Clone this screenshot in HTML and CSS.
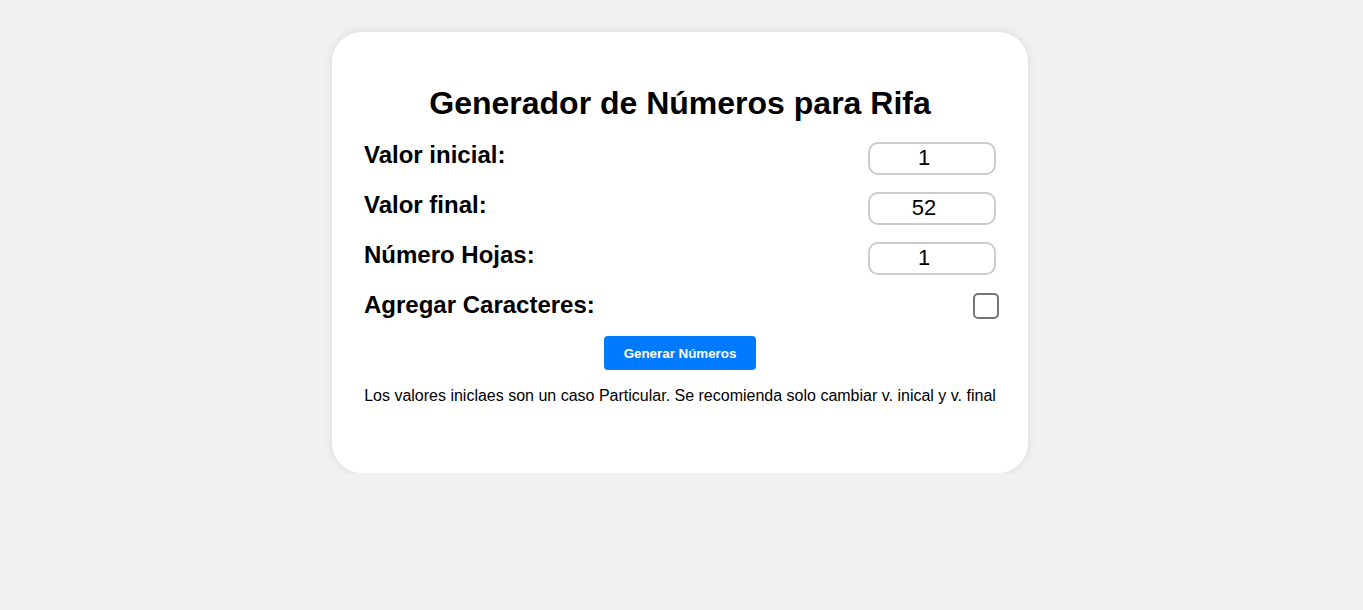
FILE: index.html
```html
<!DOCTYPE html>
<html lang="es">
<head>
<meta charset="utf-8">
<title>Generador de Números para Rifa</title>
<link rel="stylesheet" href="styles.css">
</head>
<body>
<div class="card">
  <h1 class="title">Generador de Números para Rifa</h1>
  <div class="row">
    <label class="label" for="ini">Valor inicial:</label>
    <input class="num" id="ini" type="text" value="1">
  </div>
  <div class="row">
    <label class="label" for="fin">Valor final:</label>
    <input class="num" id="fin" type="text" value="52">
  </div>
  <div class="row">
    <label class="label" for="hojas">Número Hojas:</label>
    <input class="num" id="hojas" type="text" value="1">
  </div>
  <div class="row">
    <label class="label" for="car">Agregar Caracteres:</label>
    <span class="check" id="car"></span>
  </div>
  <div class="actions">
    <button class="btn" type="button">Generar Números</button>
  </div>
  <p class="note">Los valores iniclaes son un caso Particular. Se recomienda solo cambiar v. inical y v. final</p>
</div>
</body>
</html>
```
FILE: styles.css
```css
html, body {
  margin: 0;
  padding: 0;
}
body {
  background: #f1f1f1;
  font-family: "Liberation Sans", Arial, sans-serif;
  color: #000;
  padding: 32px 3px 0 0;
}
.card {
  width: 632px;
  margin: 0 auto;
  background: #fff;
  border-radius: 30px;
  padding: 32px 32px 68px;
  box-shadow: 0 0 10px rgba(0,0,0,0.1);
}
.title {
  font-size: 32px;
  font-weight: bold;
  text-align: center;
  margin: 21px 0 8px;
  line-height: 37px;
}
.row {
  display: flex;
  justify-content: space-between;
  align-items: center;
  height: 50px;
}
.label {
  font-size: 24px;
  font-weight: bold;
  line-height: 28px;
}
.num {
  width: 128px;
  height: 33px;
  margin-top: 6px;
  box-sizing: border-box;
  border: 2px solid #ccc;
  border-radius: 10px;
  font-family: "Liberation Sans", Arial, sans-serif;
  font-size: 22px;
  color: #000;
  text-align: center;
  padding: 0 16px 0 0;
  outline: none;
}
.check {
  width: 26px;
  height: 26px;
  margin-top: 2px;
  margin-right: -3px;
  box-sizing: border-box;
  border: 2px solid #767676;
  border-radius: 5px;
}
.actions {
  display: flex;
  justify-content: center;
  margin-top: 6px;
}
.btn {
  width: 152px;
  height: 34px;
  background: #007bff;
  color: #fff;
  border: none;
  border-radius: 4px;
  font-family: "Liberation Sans", Arial, sans-serif;
  font-size: 13.33px;
  font-weight: bold;
  padding: 0;
}
.note {
  font-size: 16px;
  line-height: 18px;
  margin: 17px 0 0;
  text-align: center;
}
```
